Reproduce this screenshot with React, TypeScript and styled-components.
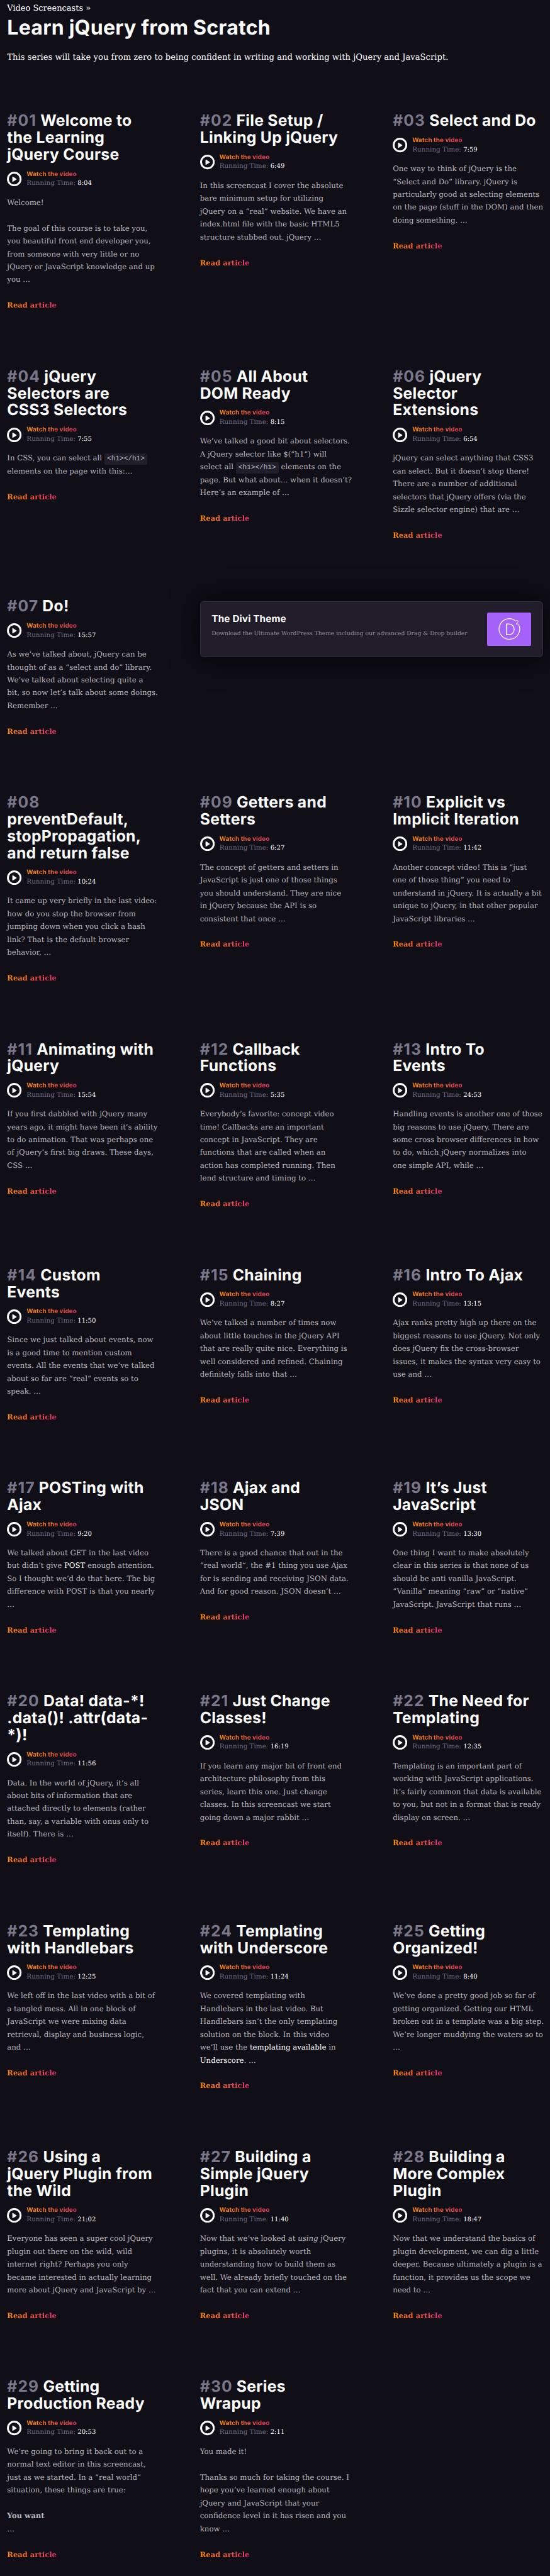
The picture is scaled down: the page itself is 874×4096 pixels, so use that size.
import React, { ReactNode } from 'react';
import styled, { createGlobalStyle } from 'styled-components';

const SCALE = 0.7056;
const px = (n: number) => `${(n * SCALE).toFixed(3)}px`;

const SERIF = `'DejaVu Serif', 'Liberation Serif', serif`;
const SANS = `Inter, 'Liberation Sans', sans-serif`;
const GRADIENT = 'linear-gradient(to right, #ff8a00, #e52e71)';

const GlobalStyle = createGlobalStyle`
  html, body { margin: 0; background: #100e17; }
  body { font-family: ${SERIF}; color: #fff; overflow: hidden; text-rendering: geometricPrecision; }
  * { box-sizing: border-box; }
`;

const Page = styled.main`
  width: 874px;
  height: 4096px;
  overflow: hidden;
  padding: ${px(6)} ${px(16)} 0;
  background: #100e17;
`;

const Header = styled.header`
  height: ${px(246.8)};
  display: flex;
  flex-direction: column;
  white-space: nowrap;
`;

const Crumb = styled.a`
  font-size: ${px(18.4)};
  line-height: ${px(29)};
`;

const PageTitle = styled.h1`
  margin: 0;
  font: 700 ${px(45.5)} / ${px(52)} ${SANS};
  letter-spacing: ${px(0.3)};
  padding-top: ${px(2)};
`;

const Intro = styled.p`
  margin: ${px(25.5)} 0 0;
  font-size: ${px(18.67)};
  line-height: ${px(30)};
`;

const Grid = styled.div`
  display: grid;
  grid-template-columns: repeat(3, ${px(338.1)});
  column-gap: ${px(96.2)};
  align-items: start;
`;

const Card = styled.article`
  min-width: 0;
  white-space: nowrap;
  padding-bottom: ${px(126.15)};
`;

const Title = styled.h2`
  margin: 0;
  font: 700 ${px(35)} / ${px(38)} ${SANS};
  letter-spacing: ${px(0.4)};
`;

const TitleLine = styled.span`
  display: block;
`;

const Num = styled.span`
  color: #7a778b;
  letter-spacing: ${px(1.6)};
`;

const Meta = styled.div`
  display: flex;
  align-items: center;
  gap: ${px(11)};
  height: ${px(75)};
  padding-bottom: ${px(1.5)};
`;

const PlayIcon = styled.svg`
  width: ${px(33)};
  height: ${px(33)};
  flex: none;
`;

const MetaText = styled.div`
  display: flex;
  flex-direction: column;
  align-items: flex-start;
  font-size: ${px(14.75)};
  line-height: ${px(20.6)};
`;

const Watch = styled.a`
  width: ${px(128)};
  font-family: ${SANS};
  font-weight: 700;
  font-size: ${px(14.3)};
  background: ${GRADIENT};
  background-clip: text;
  -webkit-background-clip: text;
  color: transparent;
`;

const Running = styled.div`
  color: #6f6c80;
`;

const Time = styled.span`
  color: #fff;
  font-size: ${px(14.3)};
`;

const Body = styled.div`
  font-size: ${px(16.65)};
  line-height: ${px(29)};
  color: #b9b7bd;
`;

const BodyLine = styled.div`
  height: ${px(29)};
`;

const Read = styled.a`
  display: block;
  width: fit-content;
  margin-top: ${px(29)};
  font-size: ${px(16.4)};
  font-weight: 700;
  background: ${GRADIENT};
  background-clip: text;
  -webkit-background-clip: text;
  color: transparent;
`;

const Code = styled.code`
  font-family: 'Liberation Mono', monospace;
  font-size: ${px(15.7)};
  background: #211e2b;
  border-radius: ${px(3)};
  padding: ${px(4)} ${px(6)};
`;

const Strong = styled.span`
  color: #fff;
`;

const Promo = styled.aside`
  grid-column: span 2;
  display: flex;
  justify-content: space-between;
  align-items: center;
  height: ${px(127)};
  margin-top: ${px(7.5)};
  padding: 0 ${px(25)};
  background: #211d2a;
  border: 1px solid #302c3d;
  border-radius: ${px(8)};
  box-shadow: 0 0 ${px(60)} ${px(6)} rgba(0, 0, 0, 0.6);
  white-space: nowrap;
`;

const PromoText = styled.div`
  padding-bottom: ${px(14)};
`;

const PromoTitle = styled.h3`
  margin: 0;
  font: 700 ${px(21.7)} / ${px(32)} ${SANS};
  letter-spacing: ${px(0.2)};
`;

const PromoSub = styled.p`
  margin: 0;
  padding-top: ${px(4)};
  font-size: ${px(13)};
  line-height: ${px(28)};
  color: #8d899a;
`;

const PromoLogo = styled.svg`
  width: ${px(100)};
  height: ${px(75)};
  border-radius: ${px(3)};
  background: #a562f9;
  flex: none;
`;

type Episode = { n: string; title: string[]; time: string; body: ReactNode[] };

const h1Code = <Code>&lt;h1&gt;&lt;/h1&gt;</Code>;

const episodes: Episode[] = [
  { n: '01', title: ['Welcome to', 'the Learning', 'jQuery Course'], time: '8:04', body: ['Welcome!', '', 'The goal of this course is to take you,', 'you beautiful front end developer you,', 'from someone with very little or no', 'jQuery or JavaScript knowledge and up', 'you …'] },
  { n: '02', title: ['File Setup /', 'Linking Up jQuery'], time: '6:49', body: ['In this screencast I cover the absolute', 'bare minimum setup for utilizing', 'jQuery on a “real” website. We have an', 'index.html file with the basic HTML5', 'structure stubbed out. jQuery …'] },
  { n: '03', title: ['Select and Do'], time: '7:59', body: ['One way to think of jQuery is the', '“Select and Do” library. jQuery is', 'particularly good at selecting elements', 'on the page (stuff in the DOM) and then', 'doing something. …'] },
  { n: '04', title: ['jQuery', 'Selectors are', 'CSS3 Selectors'], time: '7:55', body: [<>In CSS, you can select all {h1Code}</>, 'elements on the page with this:…'] },
  { n: '05', title: ['All About', 'DOM Ready'], time: '8:15', body: ['We’ve talked a good bit about selectors.', 'A jQuery selector like $(“h1”) will', <>select all {h1Code} elements on the</>, 'page. But what about… when it doesn’t?', 'Here’s an example of …'] },
  { n: '06', title: ['jQuery', 'Selector', 'Extensions'], time: '6:54', body: ['jQuery can select anything that CSS3', 'can select. But it doesn’t stop there!', 'There are a number of additional', 'selectors that jQuery offers (via the', 'Sizzle selector engine) that are …'] },
  { n: '07', title: ['Do!'], time: '15:57', body: ['As we’ve talked about, jQuery can be', 'thought of as a “select and do” library.', 'We’ve talked about selecting quite a', 'bit, so now let’s talk about some doings.', 'Remember …'] },
  { n: '08', title: ['', 'preventDefault,', 'stopPropagation,', 'and return false'], time: '10:24', body: ['It came up very briefly in the last video:', 'how do you stop the browser from', 'jumping down when you click a hash', 'link? That is the default browser', 'behavior, …'] },
  { n: '09', title: ['Getters and', 'Setters'], time: '6:27', body: ['The concept of getters and setters in', 'JavaScript is just one of those things', 'you should understand. They are nice', 'in jQuery because the API is so', 'consistent that once …'] },
  { n: '10', title: ['Explicit vs', 'Implicit Iteration'], time: '11:42', body: ['Another concept video! This is “just', 'one of those thing” you need to', 'understand in jQuery. It is actually a bit', 'unique to jQuery, in that other popular', 'JavaScript libraries …'] },
  { n: '11', title: ['Animating with', 'jQuery'], time: '15:54', body: ['If you first dabbled with jQuery many', 'years ago, it might have been it’s ability', 'to do animation. That was perhaps one', 'of jQuery’s first big draws. These days,', 'CSS …'] },
  { n: '12', title: ['Callback', 'Functions'], time: '5:35', body: ['Everybody’s favorite: concept video', 'time! Callbacks are an important', 'concept in JavaScript. They are', 'functions that are called when an', 'action has completed running. Then', 'lend structure and timing to …'] },
  { n: '13', title: ['Intro To', 'Events'], time: '24:53', body: ['Handling events is another one of those', 'big reasons to use jQuery. There are', 'some cross browser differences in how', 'to do, which jQuery normalizes into', 'one simple API, while …'] },
  { n: '14', title: ['Custom', 'Events'], time: '11:50', body: ['Since we just talked about events, now', 'is a good time to mention custom', 'events. All the events that we’ve talked', 'about so far are “real” events so to', 'speak. …'] },
  { n: '15', title: ['Chaining'], time: '8:27', body: ['We’ve talked a number of times now', 'about little touches in the jQuery API', 'that are really quite nice. Everything is', 'well considered and refined. Chaining', 'definitely falls into that …'] },
  { n: '16', title: ['Intro To Ajax'], time: '13:15', body: ['Ajax ranks pretty high up there on the', 'biggest reasons to use jQuery. Not only', 'does jQuery fix the cross-browser', 'issues, it makes the syntax very easy to', 'use and …'] },
  { n: '17', title: ['POSTing with', 'Ajax'], time: '9:20', body: ['We talked about GET in the last video', <>but didn’t give <Strong>POST</Strong> enough attention.</>, 'So I thought we’d do that here. The big', 'difference with POST is that you nearly', '…'] },
  { n: '18', title: ['Ajax and', 'JSON'], time: '7:39', body: ['There is a good chance that out in the', '“real world”, the #1 thing you use Ajax', 'for is sending and receiving JSON data.', 'And for good reason. JSON doesn’t …'] },
  { n: '19', title: ['It’s Just', 'JavaScript'], time: '13:30', body: ['One thing I want to make absolutely', 'clear in this series is that none of us', 'should be anti vanilla JavaScript.', '“Vanilla” meaning “raw” or “native”', 'JavaScript. JavaScript that runs …'] },
  { n: '20', title: ['Data! data-*!', '.data()! .attr(data-', '*)!'], time: '11:56', body: ['Data. In the world of jQuery, it’s all', 'about bits of information that are', 'attached directly to elements (rather', 'than, say, a variable with onus only to', 'itself). There is …'] },
  { n: '21', title: ['Just Change', 'Classes!'], time: '16:19', body: ['If you learn any major bit of front end', 'architecture philosophy from this', 'series, learn this one. Just change', 'classes. In this screencast we start', 'going down a major rabbit …'] },
  { n: '22', title: ['The Need for', 'Templating'], time: '12:35', body: ['Templating is an important part of', 'working with JavaScript applications.', 'It’s fairly common that data is available', 'to you, but not in a format that is ready', 'display on screen. …'] },
  { n: '23', title: ['Templating', 'with Handlebars'], time: '12:25', body: ['We left off in the last video with a bit of', 'a tangled mess. All in one block of', 'JavaScript we were mixing data', 'retrieval, display and business logic,', 'and …'] },
  { n: '24', title: ['Templating', 'with Underscore'], time: '11:24', body: ['We covered templating with', 'Handlebars in the last video. But', 'Handlebars isn’t the only templating', 'solution on the block. In this video', <>we’ll use the <Strong>templating available</Strong> in</>, <><Strong>Underscore</Strong>. …</>] },
  { n: '25', title: ['Getting', 'Organized!'], time: '8:40', body: ['We’ve done a pretty good job so far of', 'getting organized. Getting our HTML', 'broken out in a template was a big step.', 'We’re longer muddying the waters so to', '…'] },
  { n: '26', title: ['Using a', 'jQuery Plugin from', 'the Wild'], time: '21:02', body: ['Everyone has seen a super cool jQuery', 'plugin out there on the wild, wild', 'internet right? Perhaps you only', 'became interested in actually learning', 'more about jQuery and JavaScript by …'] },
  { n: '27', title: ['Building a', 'Simple jQuery', 'Plugin'], time: '11:40', body: [<>Now that we’ve looked at <em>using</em> jQuery</>, 'plugins, it is absolutely worth', 'understanding how to build them as', 'well. We already briefly touched on the', 'fact that you can extend …'] },
  { n: '28', title: ['Building a', 'More Complex', 'Plugin'], time: '18:47', body: ['Now that we understand the basics of', 'plugin development, we can dig a little', 'deeper. Because ultimately a plugin is a', 'function, it provides us the scope we', 'need to …'] },
  { n: '29', title: ['Getting', 'Production Ready'], time: '20:53', body: ['We’re going to bring it back out to a', 'normal text editor in this screencast,', 'just as we started. In a “real world”', 'situation, these things are true:', '', <b>You want</b>, '…'] },
  { n: '30', title: ['Series', 'Wrapup'], time: '2:11', body: ['You made it!', '', 'Thanks so much for taking the course. I', 'hope you’ve learned enough about', 'jQuery and JavaScript that your', 'confidence level in it has risen and you', 'know …'] },
];

function EpisodeCard({ n, title, time, body }: Episode) {
  return (
    <Card>
      <Title>
        {title.map((line, i) => (
          <TitleLine key={i}>
            {i === 0 && <Num>#{n}</Num>} {line}
          </TitleLine>
        ))}
      </Title>
      <Meta>
        <PlayIcon viewBox="0 0 33 33">
          <circle cx="16.5" cy="16.5" r="14.3" fill="none" stroke="#fff" strokeWidth="4.2" />
          <path d="M13 11.8 L21 16.9 L13 22 Z" fill="#fff" stroke="#fff" strokeWidth="1.6" strokeLinejoin="round" />
        </PlayIcon>
        <MetaText>
          <Watch>Watch the video</Watch>
          <Running>
            Running Time: <Time>{time}</Time>
          </Running>
        </MetaText>
      </Meta>
      <Body>
        {body.map((line, i) => (
          <BodyLine key={i}>{line}</BodyLine>
        ))}
        <Read>Read article</Read>
      </Body>
    </Card>
  );
}

function DiviPromo() {
  return (
    <Promo>
      <PromoText>
        <PromoTitle>The Divi Theme</PromoTitle>
        <PromoSub>Download the Ultimate WordPress Theme including our advanced Drag &amp; Drop builder</PromoSub>
      </PromoText>
      <PromoLogo viewBox="0 0 100 75" fill="none" stroke="#fff" strokeWidth="1.8">
        <path d="M64.3 18.7 A23.2 23.2 0 1 0 71.2 27.3" />
        <path d="M43.6 25.8 H49.5 A11.6 12.1 0 0 1 49.5 50 H43.6 Z" strokeWidth="2" />
        <path d="M65.2 19.8 C65.4 17.4 70.3 17.4 69.9 20.4 C69.6 22.2 66.4 23.4 65.4 25.9 H71" strokeWidth="1.4" />
      </PromoLogo>
    </Promo>
  );
}

export default function App() {
  return (
    <>
      <GlobalStyle />
      <Page>
        <Header>
          <Crumb>Video Screencasts »</Crumb>
          <PageTitle>Learn jQuery from Scratch</PageTitle>
          <Intro>This series will take you from zero to being confident in writing and working with jQuery and JavaScript.</Intro>
        </Header>
        <Grid>
          {episodes.slice(0, 7).map((e) => (
            <EpisodeCard key={e.n} {...e} />
          ))}
          <DiviPromo />
          {episodes.slice(7).map((e) => (
            <EpisodeCard key={e.n} {...e} />
          ))}
        </Grid>
      </Page>
    </>
  );
}
